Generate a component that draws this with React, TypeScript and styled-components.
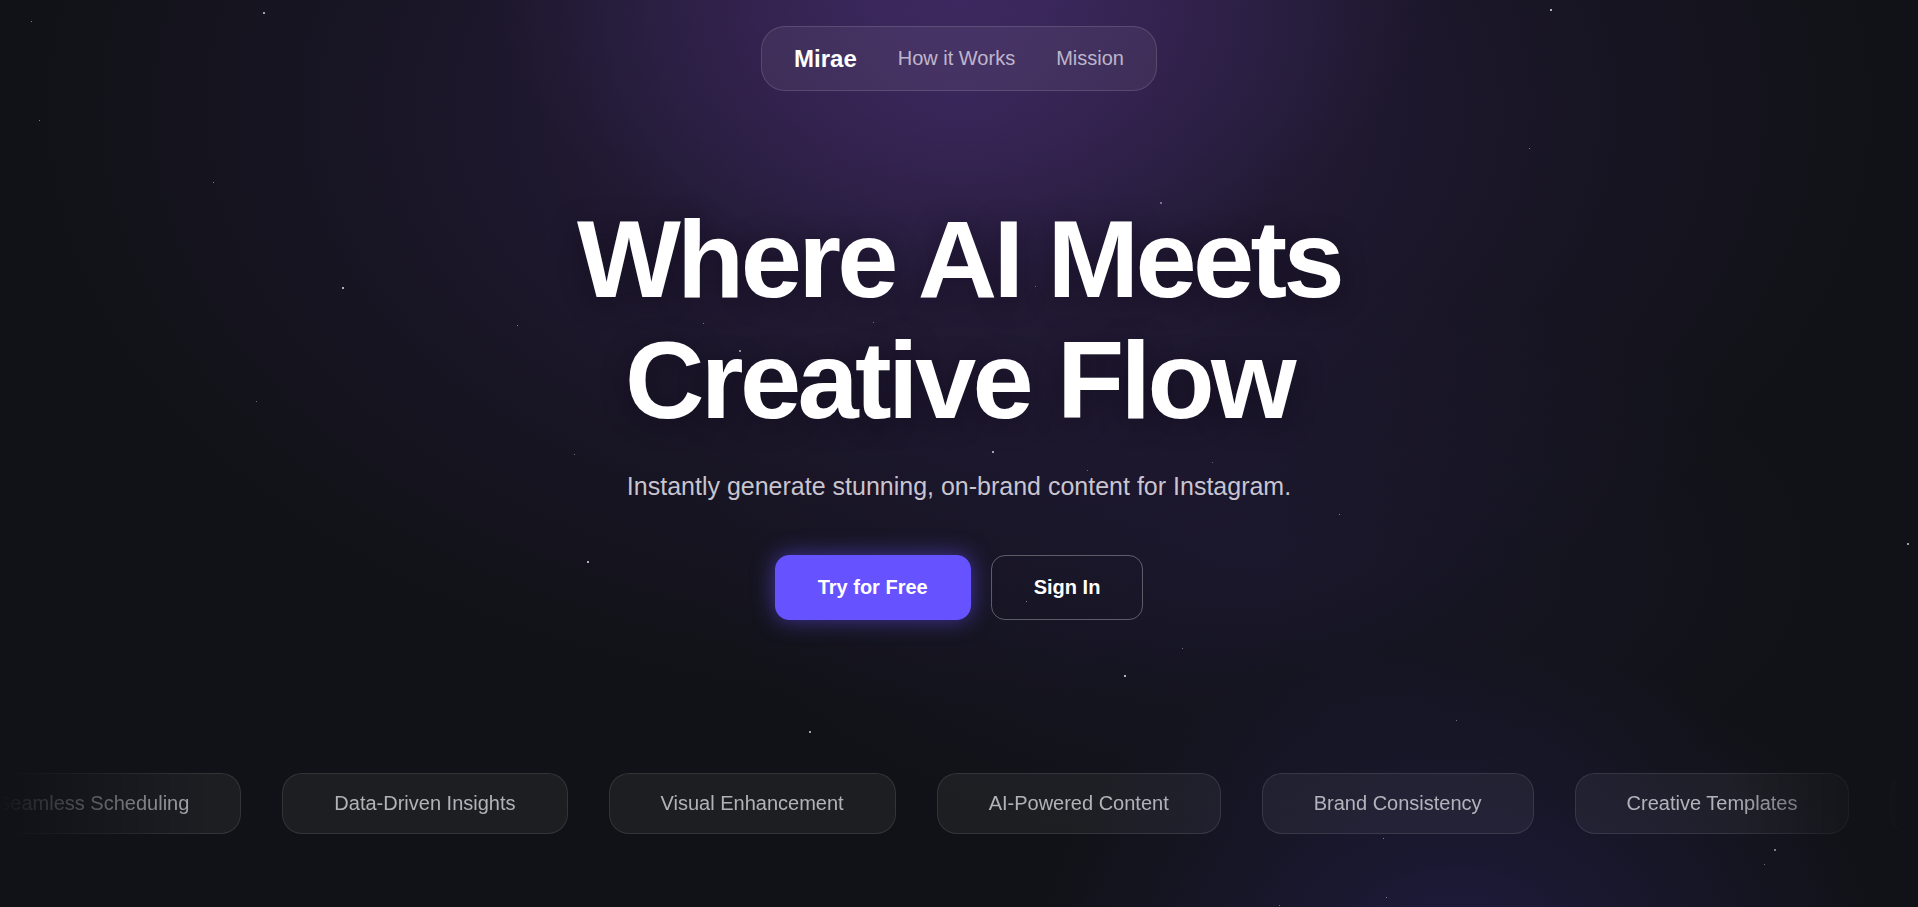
import React from 'react'
import styled, { createGlobalStyle } from 'styled-components'

const GlobalStyle = createGlobalStyle`
  html, body {
    margin: 0;
    padding: 0;
    background: #111217;
  }

  body {
    font-family: 'Liberation Sans', Arial, sans-serif;
    -webkit-font-smoothing: antialiased;
  }

  * {
    box-sizing: border-box;
  }
`

const Page = styled.main`
  position: relative;
  min-height: 100vh;
  overflow: hidden;
  display: flex;
  flex-direction: column;
  align-items: center;
  padding-top: 26px;
  background:
    radial-gradient(ellipse 560px 420px at 50% -6%, rgba(92, 56, 142, 0.5), transparent 85%),
    radial-gradient(ellipse 1050px 680px at 50% 12%, rgba(62, 40, 100, 0.6), rgba(40, 28, 66, 0.35) 55%, transparent 88%),
    radial-gradient(ellipse 700px 360px at 66% 62%, rgba(38, 30, 72, 0.35), transparent 80%),
    radial-gradient(ellipse 560px 400px at 76% 104%, rgba(46, 38, 104, 0.45), transparent 75%),
    #111217;
`

const Star = styled.span`
  position: absolute;
  border-radius: 50%;
  background: #fff;
  pointer-events: none;
`

const Nav = styled.nav`
  position: relative;
  z-index: 1;
  display: flex;
  align-items: center;
  gap: 41px;
  height: 65px;
  padding: 0 32px;
  border-radius: 24px;
  background: rgba(255, 255, 255, 0.06);
  border: 1px solid rgba(255, 255, 255, 0.13);
`

const Brand = styled.a`
  font-size: 24px;
  font-weight: 700;
  color: #fff;
  text-decoration: none;
`

const NavLink = styled.a`
  font-size: 20px;
  color: rgba(232, 226, 240, 0.75);
  text-decoration: none;
`

const Title = styled.h1`
  position: relative;
  z-index: 1;
  margin: 107px 0 0;
  font-size: 110px;
  line-height: 121px;
  font-weight: 700;
  letter-spacing: -0.033em;
  text-align: center;
  color: #fff;
  text-shadow: 0 4px 28px rgba(10, 6, 20, 0.45);
`

const Subtitle = styled.p`
  position: relative;
  z-index: 1;
  margin: 28px 0 0;
  font-size: 25px;
  line-height: 37.5px;
  color: rgba(226, 223, 232, 0.88);
`

const Actions = styled.div`
  position: relative;
  z-index: 1;
  display: flex;
  gap: 20px;
  margin-top: 49px;
`

const Button = styled.button`
  height: 65px;
  padding: 0 42px;
  border-radius: 14px;
  font-family: inherit;
  font-size: 20px;
  font-weight: 700;
  color: #fff;
  cursor: pointer;
  border: 1px solid ${({ primary }) => (primary ? '#6652ff' : 'rgba(255, 255, 255, 0.3)')};
  background: ${({ primary }) => (primary ? '#6652ff' : 'transparent')};
  box-shadow: ${({ primary }) => (primary ? '0 0 22px rgba(102, 82, 255, 0.55)' : 'none')};
`

const Marquee = styled.div`
  position: relative;
  z-index: 1;
  width: 100%;
  margin-top: 153px;
  overflow: hidden;
  mask-image: linear-gradient(to right, transparent 0, #000 11%, #000 90%, transparent 100%);
  -webkit-mask-image: linear-gradient(to right, transparent 0, #000 11%, #000 90%, transparent 100%);
`

const Track = styled.div`
  display: flex;
  gap: 41px;
  width: max-content;
  margin-left: -55px;
`

const Pill = styled.div`
  display: flex;
  align-items: center;
  height: 61px;
  padding: 0 51px;
  border-radius: 20px;
  font-size: 20px;
  white-space: nowrap;
  color: rgba(205, 205, 212, 0.85);
  background: rgba(255, 255, 255, 0.05);
  border: 1px solid rgba(255, 255, 255, 0.1);
`

const stars = [
  [263, 12, 2, 0.8], [31, 21, 1, 0.6], [1550, 9, 2, 0.9], [39, 120, 1, 0.6],
  [213, 182, 1, 0.6], [1529, 148, 1, 0.6], [1160, 202, 2, 0.5], [342, 287, 2, 0.9],
  [517, 325, 1, 0.6], [703, 323, 1, 0.5], [739, 350, 2, 0.7], [873, 322, 1, 0.5],
  [1035, 286, 1, 0.5], [256, 401, 1, 0.5], [574, 454, 1, 0.5], [992, 451, 2, 0.8],
  [1087, 470, 1, 0.5], [1212, 462, 1, 0.4], [1339, 514, 1, 0.6], [1907, 543, 2, 0.8],
  [587, 561, 2, 0.9], [1026, 601, 1, 0.6], [1182, 648, 1, 0.5], [1124, 675, 2, 0.9],
  [1456, 720, 1, 0.5], [809, 731, 2, 0.8], [1383, 838, 1, 0.6], [1774, 849, 2, 0.6],
  [1764, 864, 1, 0.5], [1386, 897, 1, 0.6], [1279, 905, 1, 0.5],
]

const features = [
  'Seamless Scheduling',
  'Data-Driven Insights',
  'Visual Enhancement',
  'AI-Powered Content',
  'Brand Consistency',
  'Creative Templates',
  'Seamless Scheduling',
  'Data-Driven Insights',
]

const App = () => {
  return (
    <Page>
      <GlobalStyle />
      {stars.map(([x, y, size, opacity], index) => (
        <Star
          key={index}
          style={{ left: x, top: y, width: size, height: size, opacity }}
        />
      ))}

      <Nav>
        <Brand href="#">Mirae</Brand>
        <NavLink href="#">How it Works</NavLink>
        <NavLink href="#">Mission</NavLink>
      </Nav>

      <Title>
        Where AI Meets
        <br />
        Creative Flow
      </Title>
      <Subtitle>Instantly generate stunning, on-brand content for Instagram.</Subtitle>

      <Actions>
        <Button primary type="button">
          Try for Free
        </Button>
        <Button type="button">Sign In</Button>
      </Actions>

      <Marquee>
        <Track>
          {features.map((label, index) => (
            <Pill key={index}>{label}</Pill>
          ))}
        </Track>
      </Marquee>
    </Page>
  )
}

export default App
